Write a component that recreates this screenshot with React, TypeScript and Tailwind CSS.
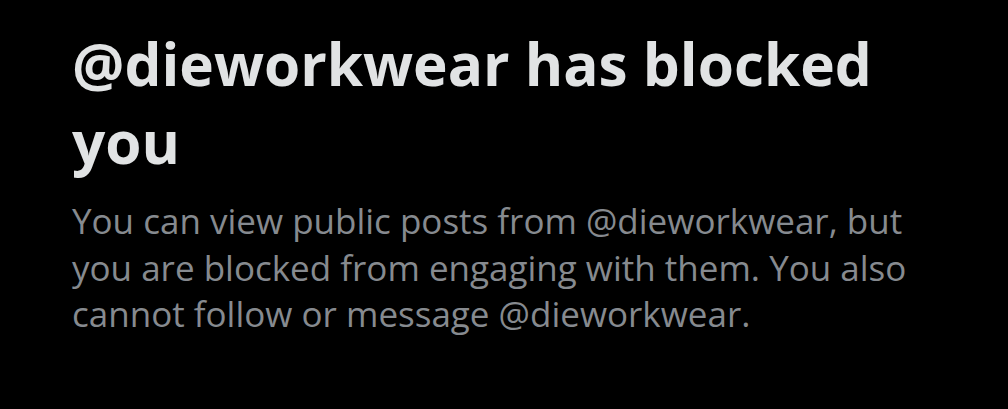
export default function App() {
  return (
    <main className="h-[409px] w-[1008px] overflow-hidden bg-black pl-[72px] pt-[24px] font-['Open_Sans',sans-serif]">
      <h1 className="w-[900px] text-[58.5px] font-bold leading-[78px] text-[#e1e3e4]">
        @dieworkwear has blocked you
      </h1>
      <p className="mt-[18px] w-[850px] text-[35px] leading-[46.5px] text-[#868a8f]">
        You can view public posts from @dieworkwear, but you are blocked from engaging with them. You also cannot follow or message @dieworkwear.
      </p>
    </main>
  );
}
